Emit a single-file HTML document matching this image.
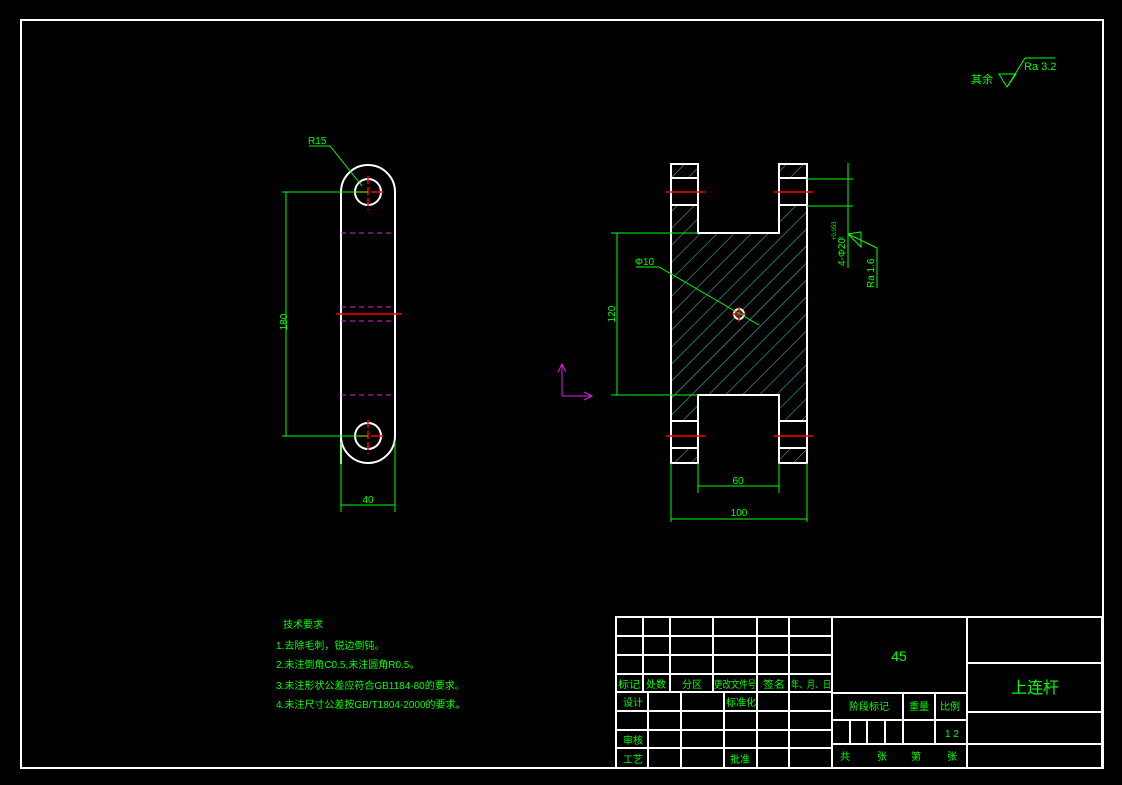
<!DOCTYPE html>
<html><head><meta charset="utf-8"><style>
html,body{margin:0;padding:0;background:#000;}
svg{display:block}
text{font-family:"Liberation Sans","WenQuanYi Zen Hei",sans-serif;fill:#00ff00;}
</style></head><body>
<svg width="1122" height="785" viewBox="0 0 1122 785" xmlns="http://www.w3.org/2000/svg">
<defs>
<pattern id="h" patternUnits="userSpaceOnUse" width="12" height="12" patternTransform="rotate(45)">
<line x1="0" y1="0" x2="0" y2="12" stroke="#3fc8d8" stroke-width="1"/>
</pattern>
</defs>
<rect width="1122" height="785" fill="#000"/>
<rect x="21" y="20" width="1082" height="748" fill="none" stroke="#fff" stroke-width="2"/>

<!-- roughness top right -->
<text x="971" y="83" font-size="11">其余</text>
<polygon points="999,74 1016,74 1007,87" fill="none" stroke="#0f0"/>
<polyline points="1007,87 1025,58 1055,58" fill="none" stroke="#0f0"/>
<text x="1024" y="70" font-size="11">Ra 3.2</text>

<!-- LEFT VIEW -->
<g fill="none">
<path d="M341,464 V192 A27,27 0 0 1 395,192 V436 A27,27 0 0 1 341,436" stroke="#fff" stroke-width="2"/>
<circle cx="368" cy="192" r="13" stroke="#fff" stroke-width="2"/>
<circle cx="368" cy="436" r="13" stroke="#fff" stroke-width="2"/>
<g stroke="#e020e0" stroke-dasharray="5,4">
<line x1="341" y1="233" x2="395" y2="233"/><line x1="341" y1="307" x2="395" y2="307"/>
<line x1="341" y1="321" x2="395" y2="321"/><line x1="341" y1="395" x2="395" y2="395"/>
</g>
<g stroke="#f00" stroke-width="1.5">
<line x1="336" y1="314" x2="402" y2="314"/>
<line x1="368" y1="176" x2="368" y2="210" stroke-dasharray="8,3"/><line x1="356" y1="192" x2="386" y2="192" stroke-dasharray="12,3"/>
<line x1="368" y1="420" x2="368" y2="454" stroke-dasharray="8,3"/><line x1="356" y1="436" x2="386" y2="436" stroke-dasharray="12,3"/>
</g>
<g stroke="#0f0">
<line x1="282" y1="192" x2="368" y2="192"/><line x1="282" y1="436" x2="368" y2="436"/>
<line x1="286" y1="192" x2="286" y2="436"/>
<line x1="341" y1="442" x2="341" y2="512"/><line x1="395" y1="442" x2="395" y2="512"/>
<line x1="341" y1="505" x2="395" y2="505"/>
<polyline points="309,146 330,146 362,186"/>
</g>
</g>
<text x="308" y="144" font-size="10">R15</text>
<text x="287" y="322" font-size="10" transform="rotate(-90 287 322)" text-anchor="middle">180</text>
<text x="368" y="503" font-size="10" text-anchor="middle">40</text>

<!-- RIGHT VIEW -->
<path d="M671,164 H698 V233 H779 V164 H807 V463 H779 V395 H698 V463 H671 Z" fill="url(#h)" stroke="none"/>
<g fill="#000">
<rect x="672" y="178" width="25" height="27"/><rect x="780" y="178" width="26" height="27"/>
<rect x="672" y="421" width="25" height="27"/><rect x="780" y="421" width="26" height="27"/>
</g>
<g fill="none" stroke="#fff" stroke-width="2">
<path d="M671,164 H698 V233 H779 V164 H807 V463 H779 V395 H698 V463 H671 Z"/>
<line x1="671" y1="178" x2="698" y2="178"/><line x1="671" y1="205" x2="698" y2="205"/>
<line x1="779" y1="178" x2="807" y2="178"/><line x1="779" y1="205" x2="807" y2="205"/>
<line x1="671" y1="421" x2="698" y2="421"/><line x1="671" y1="448" x2="698" y2="448"/>
<line x1="779" y1="421" x2="807" y2="421"/><line x1="779" y1="448" x2="807" y2="448"/>
<circle cx="739" cy="314" r="5"/>
</g>
<g stroke="#f00" stroke-width="1.5">
<line x1="666" y1="192" x2="705" y2="192"/><line x1="774" y1="192" x2="813" y2="192"/>
<line x1="666" y1="436" x2="705" y2="436"/><line x1="774" y1="436" x2="813" y2="436"/>
<line x1="732" y1="314" x2="746" y2="314"/><line x1="739" y1="307" x2="739" y2="322"/>
</g>
<g stroke="#0f0" fill="none">
<line x1="611" y1="233" x2="698" y2="233"/><line x1="611" y1="395" x2="698" y2="395"/>
<line x1="617" y1="233" x2="617" y2="395"/>
<polyline points="636,267 659,267 759,325"/>
<line x1="698" y1="463" x2="698" y2="493"/><line x1="779" y1="463" x2="779" y2="493"/>
<line x1="698" y1="486" x2="779" y2="486"/>
<line x1="671" y1="463" x2="671" y2="522"/><line x1="807" y1="463" x2="807" y2="522"/>
<line x1="671" y1="519" x2="807" y2="519"/>
<line x1="807" y1="179" x2="853" y2="179"/><line x1="807" y1="206" x2="853" y2="206"/>
<line x1="848" y1="163" x2="848" y2="268"/>
<polyline points="848,234 861,232 861,247 848,234 877,248 877,288"/>
</g>
<text x="635" y="265" font-size="10">Φ10</text>
<text x="615" y="314" font-size="10" transform="rotate(-90 615 314)" text-anchor="middle">120</text>
<text x="738" y="484" font-size="10" text-anchor="middle">60</text>
<text x="739" y="516" font-size="10" text-anchor="middle">100</text>
<text x="845" y="266" font-size="10" transform="rotate(-90 845 266)">4-Φ20</text>
<text x="836" y="240" font-size="6" transform="rotate(-90 836 240)">+0.053</text>
<text x="843" y="240" font-size="6" transform="rotate(-90 843 240)">0</text>
<text x="874" y="288" font-size="10" transform="rotate(-90 874 288)">Ra 1.6</text>

<!-- UCS icon -->
<g stroke="#e020e0" fill="none">
<polyline points="562,396 562,364"/><polyline points="558,372 562,364 566,372"/>
<polyline points="562,396 592,396"/><polyline points="584,392 592,396 584,400"/>
</g>

<!-- tech requirements -->
<g font-size="10">
<text x="283" y="628">技术要求</text>
<text x="276" y="649">1.去除毛刺，锐边倒钝。</text>
<text x="276" y="668">2.未注倒角C0.5,未注圆角R0.5。</text>
<text x="276" y="689">3.未注形状公差应符合GB1184-80的要求。</text>
<text x="276" y="708">4.未注尺寸公差按GB/T1804-2000的要求。</text>
</g>

<!-- TITLE BLOCK -->
<g stroke="#fff" stroke-width="2" fill="none">
<rect x="616" y="617" width="486" height="151"/>
<line x1="832" y1="617" x2="832" y2="768"/><line x1="967" y1="617" x2="967" y2="768"/>
<line x1="616" y1="636" x2="832" y2="636"/><line x1="616" y1="655" x2="832" y2="655"/>
<line x1="616" y1="674" x2="832" y2="674"/><line x1="616" y1="692" x2="832" y2="692"/>
<line x1="616" y1="711" x2="832" y2="711"/><line x1="616" y1="730" x2="832" y2="730"/>
<line x1="616" y1="748" x2="832" y2="748"/>
<line x1="643" y1="617" x2="643" y2="692"/><line x1="670" y1="617" x2="670" y2="692"/>
<line x1="713" y1="617" x2="713" y2="692"/><line x1="757" y1="617" x2="757" y2="768"/>
<line x1="789" y1="617" x2="789" y2="768"/>
<line x1="648" y1="692" x2="648" y2="768"/><line x1="681" y1="692" x2="681" y2="768"/>
<line x1="724" y1="692" x2="724" y2="768"/>
<line x1="832" y1="693" x2="967" y2="693"/><line x1="832" y1="720" x2="967" y2="720"/>
<line x1="832" y1="744" x2="967" y2="744"/>
<line x1="903" y1="693" x2="903" y2="744"/><line x1="935" y1="693" x2="935" y2="744"/>
<line x1="850" y1="720" x2="850" y2="744"/><line x1="867" y1="720" x2="867" y2="744"/><line x1="885" y1="720" x2="885" y2="744"/>
<line x1="967" y1="663" x2="1102" y2="663"/><line x1="967" y1="712" x2="1102" y2="712"/>
<line x1="967" y1="744" x2="1102" y2="744"/>
</g>
<g font-size="10">
<text x="618" y="688" textLength="22" lengthAdjust="spacingAndGlyphs">标记</text>
<text x="646" y="688" textLength="20" lengthAdjust="spacingAndGlyphs">处数</text>
<text x="682" y="688">分区</text>
<text x="714" y="688" textLength="42" lengthAdjust="spacingAndGlyphs">更改文件号</text>
<text x="763" y="688" textLength="22" lengthAdjust="spacingAndGlyphs">签名</text>
<text x="791" y="688" textLength="40" lengthAdjust="spacingAndGlyphs">年、月、日</text>
<text x="623" y="706">设计</text><text x="726" y="706" textLength="30" lengthAdjust="spacingAndGlyphs">标准化</text>
<text x="623" y="744">审核</text><text x="623" y="763">工艺</text><text x="730" y="763">批准</text>
<text x="849" y="710">阶段标记</text><text x="909" y="710">重量</text><text x="940" y="710">比例</text>
<text x="945" y="737">1 2</text>
<text x="840" y="760">共</text><text x="877" y="760">张</text><text x="911" y="760">第</text><text x="947" y="760">张</text>
</g>
<text x="899" y="661" font-size="14" text-anchor="middle">45</text>
<text x="1035" y="693" font-size="16" text-anchor="middle">上连杆</text>
</svg>
</body></html>
